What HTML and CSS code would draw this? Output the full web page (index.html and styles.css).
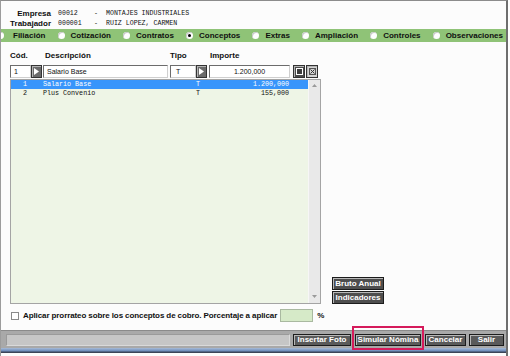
FILE: index.html
```html
<!DOCTYPE html>
<html lang="es">
<head>
    <meta charset="UTF-8">
    <title>Conceptos</title>
    <link rel="stylesheet" href="styles.css">
</head>
<body>
    <div class="window">
        <div class="header">
            <div class="hrow"><span class="hlabel">Empresa</span><span class="hcode">00012</span><span class="hdash">-</span><span class="hname">MONTAJES INDUSTRIALES</span></div>
            <div class="hrow"><span class="hlabel">Trabajador</span><span class="hcode">000001</span><span class="hdash">-</span><span class="hname">RUIZ LOPEZ, CARMEN</span></div>
        </div>

        <div class="tabs">
            <label class="tab"><span class="radio"></span>Filiación</label>
            <label class="tab"><span class="radio"></span>Cotización</label>
            <label class="tab"><span class="radio"></span>Contratos</label>
            <label class="tab"><span class="radio checked"></span>Conceptos</label>
            <label class="tab"><span class="radio"></span>Extras</label>
            <label class="tab"><span class="radio"></span>Ampliación</label>
            <label class="tab"><span class="radio"></span>Controles</label>
            <label class="tab"><span class="radio"></span>Observaciones</label>
        </div>

        <div class="content">
            <div class="cols">
                <span class="col-cod">Cód.</span>
                <span class="col-desc">Descripción</span>
                <span class="col-tipo">Tipo</span>
                <span class="col-imp">Importe</span>
            </div>

            <div class="editrow">
                <div class="inp inp-cod">1</div>
                <div class="sqbtn"><svg width="5" height="7" viewBox="0 0 5 7"><path d="M0 0 L5 3.5 L0 7 Z" fill="#fff"/></svg></div>
                <div class="inp inp-desc">Salario Base</div>
                <div class="inp inp-tipo">T</div>
                <div class="sqbtn"><svg width="5" height="7" viewBox="0 0 5 7"><path d="M0 0 L5 3.5 L0 7 Z" fill="#fff"/></svg></div>
                <div class="inp inp-imp">1.200,000</div>
                <div class="sqbtn sq-ok"><svg width="7" height="7" viewBox="0 0 7 7"><rect x="0.5" y="0.5" width="6" height="6" fill="#3c3c3c" stroke="#fff"/></svg></div>
                <div class="sqbtn sq-del"><svg width="7" height="7" viewBox="0 0 7 7"><rect x="0.5" y="0.5" width="6" height="6" fill="none" stroke="#555"/><path d="M1.5 1.5 L5.5 5.5 M5.5 1.5 L1.5 5.5" stroke="#333"/></svg></div>
            </div>

            <div class="main">
                <div class="list">
                    <div class="rows">
                        <div class="row selected"><span class="c-cod">1</span><span class="c-desc">Salario Base</span><span class="c-tipo">T</span><span class="c-imp">1.200,000</span></div>
                        <div class="row"><span class="c-cod">2</span><span class="c-desc">Plus Convenio</span><span class="c-tipo">T</span><span class="c-imp">155,000</span></div>
                    </div>
                    <div class="scroll">
                        <svg width="5" height="3" viewBox="0 0 5 3"><path d="M0 3 L2.5 0 L5 3 Z" fill="#9a9a9a"/></svg>
                        <svg width="5" height="3" viewBox="0 0 5 3"><path d="M0 0 L2.5 3 L5 0 Z" fill="#9a9a9a"/></svg>
                    </div>
                </div>
                <div class="side">
                    <div class="dbtn">Bruto Anual</div>
                    <div class="dbtn">Indicadores</div>
                </div>
            </div>

            <div class="checkrow">
                <span class="checkbox"></span>
                <span class="checktext">Aplicar prorrateo sobre los conceptos de cobro. Porcentaje a aplicar</span>
                <span class="pct-input"></span>
                <span class="pct">%</span>
            </div>
        </div>

        <div class="statusbar">
            <div class="status-field"></div>
            <div class="dbtn bbtn b-foto">Insertar Foto</div>
            <div class="dbtn bbtn b-sim highlight">Simular Nómina</div>
            <div class="dbtn bbtn b-can">Cancelar</div>
            <div class="dbtn bbtn b-sal">Salir</div>
        </div>
        <div class="taskbar"></div>
    </div>
</body>
</html>
```

FILE: styles.css
```css
body {
    margin: 0;
    padding: 0;
    background-color: #ffffff;
    font-family: "Liberation Sans", Arial, sans-serif;
    font-size: 8px;
    color: #101010;
}

.window {
    width: 508px;
    height: 356px;
    border-top: 1px solid #8c8c8c;
    border-left: 1px solid #9c9c9c;
    border-right: 2px solid #6e6e6e;
    background-color: #fcfcfc;
    display: flex;
    flex-direction: column;
    box-sizing: border-box;
    overflow: hidden;
}

.window > div {
    flex-shrink: 0;
}

/* header with company / worker */
.header {
    height: 28px;
    padding-top: 7px;
    box-sizing: border-box;
}

.hrow {
    display: flex;
    align-items: center;
    height: 10px;
}

.hlabel {
    width: 50px;
    text-align: right;
    font-weight: bold;
}

.hcode, .hdash, .hname {
    font-family: "Liberation Mono", "DejaVu Sans Mono", monospace;
    font-size: 6.6px;
}

.hcode {
    margin-left: 7px;
    width: 36px;
}

.hdash {
    width: 12px;
}

/* green radio tab bar */
.tabs {
    height: 13px;
    background-color: #8fc377;
    display: flex;
    align-items: center;
    justify-content: space-between;
    padding-right: 3px;
    font-weight: bold;
}

.tab {
    display: flex;
    align-items: center;
}

.radio {
    width: 7px;
    height: 7px;
    border-radius: 50%;
    background-color: #ffffff;
    box-shadow: inset 1px 1px 0 #c8c8c8;
    margin-right: 6px;
    position: relative;
}

.tab:first-child .radio {
    margin-left: -4px;
    margin-right: 9px;
}

.radio.checked::after {
    content: "";
    position: absolute;
    left: 2px;
    top: 2px;
    width: 3px;
    height: 3px;
    border-radius: 50%;
    background-color: #000;
}

/* main content */
.content {
    padding-left: 9px;
    height: 288px;
    box-sizing: border-box;
}

.cols {
    display: flex;
    align-items: center;
    height: 10px;
    margin-top: 8px;
    font-weight: bold;
}

.col-cod { width: 35px; }
.col-desc { width: 125px; }
.col-tipo { width: 40px; }

.editrow {
    display: flex;
    height: 13px;
    margin-top: 5px;
}

.inp {
    height: 13px;
    box-sizing: border-box;
    background-color: #ffffff;
    border: 1px solid;
    border-color: #6c6c6c #cfcfcf #cfcfcf #6c6c6c;
    font-size: 7px;
    line-height: 11px;
    padding-left: 3px;
}

.inp-cod { width: 21px; }
.inp-desc { width: 125px; margin-left: 1px; }
.inp-tipo { width: 26px; margin-left: 2px; padding-left: 5px; }
.inp-imp { width: 81px; margin-left: 2px; text-align: center; padding-left: 0; }

.sqbtn {
    width: 11px;
    height: 13px;
    box-sizing: border-box;
    background-color: #6a6a6a;
    border: 1px solid #333333;
    box-shadow: inset 1px 1px 0 #b4b4b4;
    display: flex;
    align-items: center;
    justify-content: center;
}

.sq-ok {
    width: 12px;
    margin-left: 3px;
    background-color: #4a4a4a;
}

.sq-del {
    width: 12px;
    margin-left: 1px;
    background-color: #d4d4d4;
}

.main {
    display: flex;
    height: 225px;
    margin-top: 1px;
}

.list {
    width: 311px;
    box-sizing: border-box;
    border: 1px solid #a4a4a4;
    background-color: #eef5e6;
    display: flex;
}

.rows {
    flex: 1;
    font-family: "Liberation Mono", "DejaVu Sans Mono", monospace;
    font-size: 6.7px;
}

.row {
    display: flex;
    height: 9px;
    line-height: 9px;
}

.row.selected {
    background-color: #3895fb;
    color: #ffffff;
}

.c-cod { width: 16px; text-align: right; }
.c-desc { width: 153px; margin-left: 16px; }
.c-tipo { width: 40px; }
.c-imp { width: 53px; text-align: right; }

.scroll {
    width: 11px;
    background-color: #e9e9e9;
    border-left: 1px solid #f6f6f6;
    display: flex;
    flex-direction: column;
    align-items: center;
    justify-content: space-between;
    padding: 4px 0 5px;
}

.side {
    display: flex;
    flex-direction: column;
    justify-content: flex-end;
    gap: 1px;
    margin-left: 11px;
}

.dbtn {
    height: 13px;
    box-sizing: border-box;
    background-color: #4e4e4e;
    border: 1px solid #1c1c1c;
    box-shadow: inset 1px 1px 0 #b8b8b8;
    color: #ffffff;
    font-weight: bold;
    text-align: center;
    line-height: 11px;
}

.side .dbtn {
    width: 52px;
}

.checkrow {
    display: flex;
    align-items: center;
    height: 13px;
    margin-top: 5px;
    font-weight: bold;
}

.checkbox {
    width: 8px;
    height: 8px;
    box-sizing: border-box;
    background-color: #ffffff;
    border: 1px solid #8a8a8a;
    margin-left: 1px;
    margin-right: 4px;
}

.checktext {
    letter-spacing: -0.1px;
}

.pct-input {
    width: 33px;
    height: 13px;
    box-sizing: border-box;
    background-color: #d6eac8;
    border: 1px solid #a9b9a0;
    margin-left: 3px;
}

.pct {
    margin-left: 4px;
}

/* bottom status bar */
.statusbar {
    height: 18px;
    background-color: #a9a9a9;
    border-top: 1px solid #8a8a8a;
    box-sizing: border-box;
    display: flex;
    align-items: center;
    padding-left: 5px;
}

.status-field {
    width: 284px;
    height: 12px;
    box-sizing: border-box;
    background-color: #c6c6c6;
    border: 1px solid;
    border-color: #9a9a9a #dadada #dadada #9a9a9a;
    margin-right: 3px;
}

.bbtn {
    height: 12px;
    line-height: 10px;
    background-color: #5a5a5a;
}

.b-foto { width: 58px; }
.b-sim { width: 66px; margin-left: 4px; }
.b-can { width: 41px; margin-left: 4px; }
.b-sal { width: 35px; margin-left: 3px; }

.highlight {
    position: relative;
}

.highlight::after {
    content: "";
    position: absolute;
    left: -4px;
    right: -4px;
    top: -9px;
    bottom: -5px;
    border: 2px solid #d51a5b;
}

.taskbar {
    height: 5px;
    background: linear-gradient(#a8bcd8, #6b8bbb 60%, #3c4558 80%);
}
```
